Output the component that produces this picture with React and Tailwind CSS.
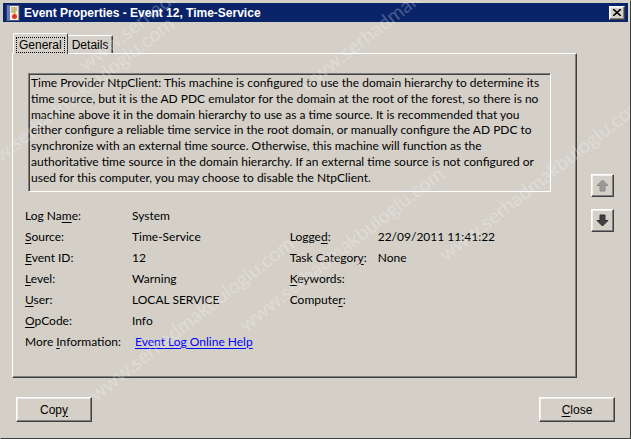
import React from 'react';

const ui = { fontFamily: 'Lato, "Open Sans", sans-serif' };
const tahoma = { fontFamily: '"Liberation Sans", Arial, sans-serif' };

const raised =
  'border border-t-white border-l-white border-r-[#404040] border-b-[#404040] shadow-[inset_-1px_-1px_0_#808080,inset_1px_1px_0_#f0efea]';

const descLines = [
  'Time Provider NtpClient: This machine is configured to use the domain hierarchy to determine its',
  'time source, but it is the AD PDC emulator for the domain at the root of the forest, so there is no',
  'machine above it in the domain hierarchy to use as a time source. It is recommended that you',
  'either configure a reliable time service in the root domain, or manually configure the AD PDC to',
  'synchronize with an external time source. Otherwise, this machine will function as the',
  'authoritative time source in the domain hierarchy. If an external time source is not configured or',
  'used for this computer, you may choose to disable the NtpClient.',
];

const Key = ({ children }) => <span className="underline underline-offset-2">{children}</span>;

const leftFields = [
  [<>Log Na<Key>m</Key>e:</>, 'System'],
  [<><Key>S</Key>ource:</>, 'Time-Service'],
  [<><Key>E</Key>vent ID:</>, '12'],
  [<><Key>L</Key>evel:</>, 'Warning'],
  [<><Key>U</Key>ser:</>, 'LOCAL SERVICE'],
  [<><Key>O</Key>pCode:</>, 'Info'],
];

const rightFields = [
  [<>Logge<Key>d</Key>:</>, '22/09/2011 11:41:22'],
  [<>Task Categor<Key>y</Key>:</>, 'None'],
  [<><Key>K</Key>eywords:</>, ''],
  [<>Compute<Key>r</Key>:</>, ''],
];

// faint watermark across the screenshot
const marks = [
  { left: -30, top: 160 },
  { left: 80, top: 50 },
  { left: 240, top: 310 },
  { left: 300, top: 70 },
  { left: 440, top: 240 },
  { left: 90, top: 380 },
];

function EventIcon() {
  return (
    <svg width="14" height="16" viewBox="0 0 14 16">
      <rect x="1" y="0.5" width="12" height="15" fill="#f4f0d8" stroke="#4a5a8a" />
      <rect x="1" y="0.5" width="3" height="15" fill="#6a7ab0" />
      <path d="M5 3h6M5 5h6M5 7h5" stroke="#8a8a8a" />
      <circle cx="8.5" cy="11.5" r="2.5" fill="#e03030" />
      <path d="M8.5 2v7" stroke="#d8b020" strokeWidth="1.5" />
    </svg>
  );
}

function ArrowBtn({ up, disabled }) {
  const fill = disabled ? '#9a9a9a' : '#404040';
  const stroke = disabled ? '#8a8a8a' : '#303030';
  return (
    <div className={`w-[23px] h-[23px] bg-[#d4d0c8] flex items-center justify-center ${raised}`}>
      <svg width="13" height="13" viewBox="0 0 13 13">
        {up ? (
          <path d="M6.5 1L12 6.5H9V12H4V6.5H1Z" fill={fill} stroke={stroke} />
        ) : (
          <path d="M6.5 12L12 6.5H9V1H4V6.5H1Z" fill={fill} stroke={stroke} />
        )}
      </svg>
    </div>
  );
}

export default function App() {
  return (
    <div className="relative w-[631px] h-[439px] overflow-hidden bg-[#d4d0c8] border border-t-[#d4d0c8] border-l-[#d4d0c8] border-r-[#404040] border-b-[#404040] p-[2px] flex flex-col">
      <div className="h-[19px] bg-[#0a246a] flex items-center pl-[3px] pr-[3px] text-white">
        <EventIcon />
        <span className="ml-[4px] text-[12px] font-bold" style={tahoma}>
          Event Properties - Event 12, Time-Service
        </span>
        <div className={`ml-auto w-[16px] h-[14px] bg-[#d4d0c8] flex items-center justify-center ${raised}`}>
          <svg width="8" height="7" viewBox="0 0 8 7">
            <path d="M0 0L8 7M8 0L0 7" stroke="#000" strokeWidth="1.6" />
          </svg>
        </div>
      </div>

      <div className="flex-1 flex flex-col px-[9px] pt-[10px]">
        <div className="flex items-end h-[21px] pl-[1px] text-[12px] text-black" style={tahoma}>
          <div className="relative z-10 h-[21px] -mb-px px-[3px] pt-[2px] bg-[#d4d0c8] border border-t-white border-l-white border-r-[#404040] border-b-0 rounded-t-[2px]">
            <span className="px-[2px] outline-1 outline-dotted outline-black">General</span>
          </div>
          <div className="h-[18px] px-[4px] bg-[#d4d0c8] border border-t-white border-l-0 border-r-[#404040] border-b-0 shadow-[inset_-1px_0_0_#808080] rounded-tr-[2px]">
            Details
          </div>
        </div>

        <div className="flex gap-[14px]">
          <div className="w-[565px] h-[325px] border border-t-white border-l-white border-r-[#404040] border-b-[#404040] shadow-[inset_-1px_-1px_0_#808080] pt-[19px] pl-[15px]" style={ui}>
            <div className="w-[523px] h-[119px] border border-t-[#808080] border-l-[#808080] border-r-white border-b-white shadow-[inset_1px_1px_0_#404040] pl-[2px] pt-[1px] text-[12px] leading-[15.8px] text-black">
              {descLines.map((l, i) => (
                <div key={i} className="whitespace-nowrap">{l}</div>
              ))}
            </div>

            <div className="flex mt-[13px] -ml-[3px] text-[12px] text-black">
              <div className="flex flex-col">
                {leftFields.map(([k, v], i) => (
                  <div key={i} className="h-[21px] flex items-center">
                    <span className="w-[107px]">{k}</span>
                    <span>{v}</span>
                  </div>
                ))}
                <div className="h-[21px] flex items-center">
                  <span className="w-[110px]">More <Key>I</Key>nformation:</span>
                  <span className="text-[#0000ff] underline underline-offset-2">Event Log Online Help</span>
                </div>
              </div>
              <div className="flex flex-col ml-[37px] pt-[21px]">
                {rightFields.map(([k, v], i) => (
                  <div key={i} className="h-[21px] flex items-center">
                    <span className="w-[88px]">{k}</span>
                    <span>{v}</span>
                  </div>
                ))}
              </div>
            </div>
          </div>

          <div className="flex flex-col gap-[12px] pt-[121px]">
            <ArrowBtn up disabled />
            <ArrowBtn />
          </div>
        </div>

        <div className="flex justify-between mt-[19px] px-[4px] text-[12px] text-black" style={tahoma}>
          <div className={`w-[76px] h-[25px] flex items-center justify-center ${raised}`}>
            Cop<Key>y</Key>
          </div>
          <div className={`w-[76px] h-[25px] flex items-center justify-center ${raised}`}>
            <Key>C</Key>lose
          </div>
        </div>
      </div>

      {marks.map((m, i) => (
        <div
          key={i}
          aria-hidden="true"
          className="absolute pointer-events-none whitespace-nowrap text-[20px] text-white/25 -rotate-[38deg] origin-left"
          style={{ left: m.left, top: m.top, fontFamily: 'Lato, sans-serif' }}
        >
          www.serhadmakbuloglu.com
        </div>
      ))}
    </div>
  );
}
